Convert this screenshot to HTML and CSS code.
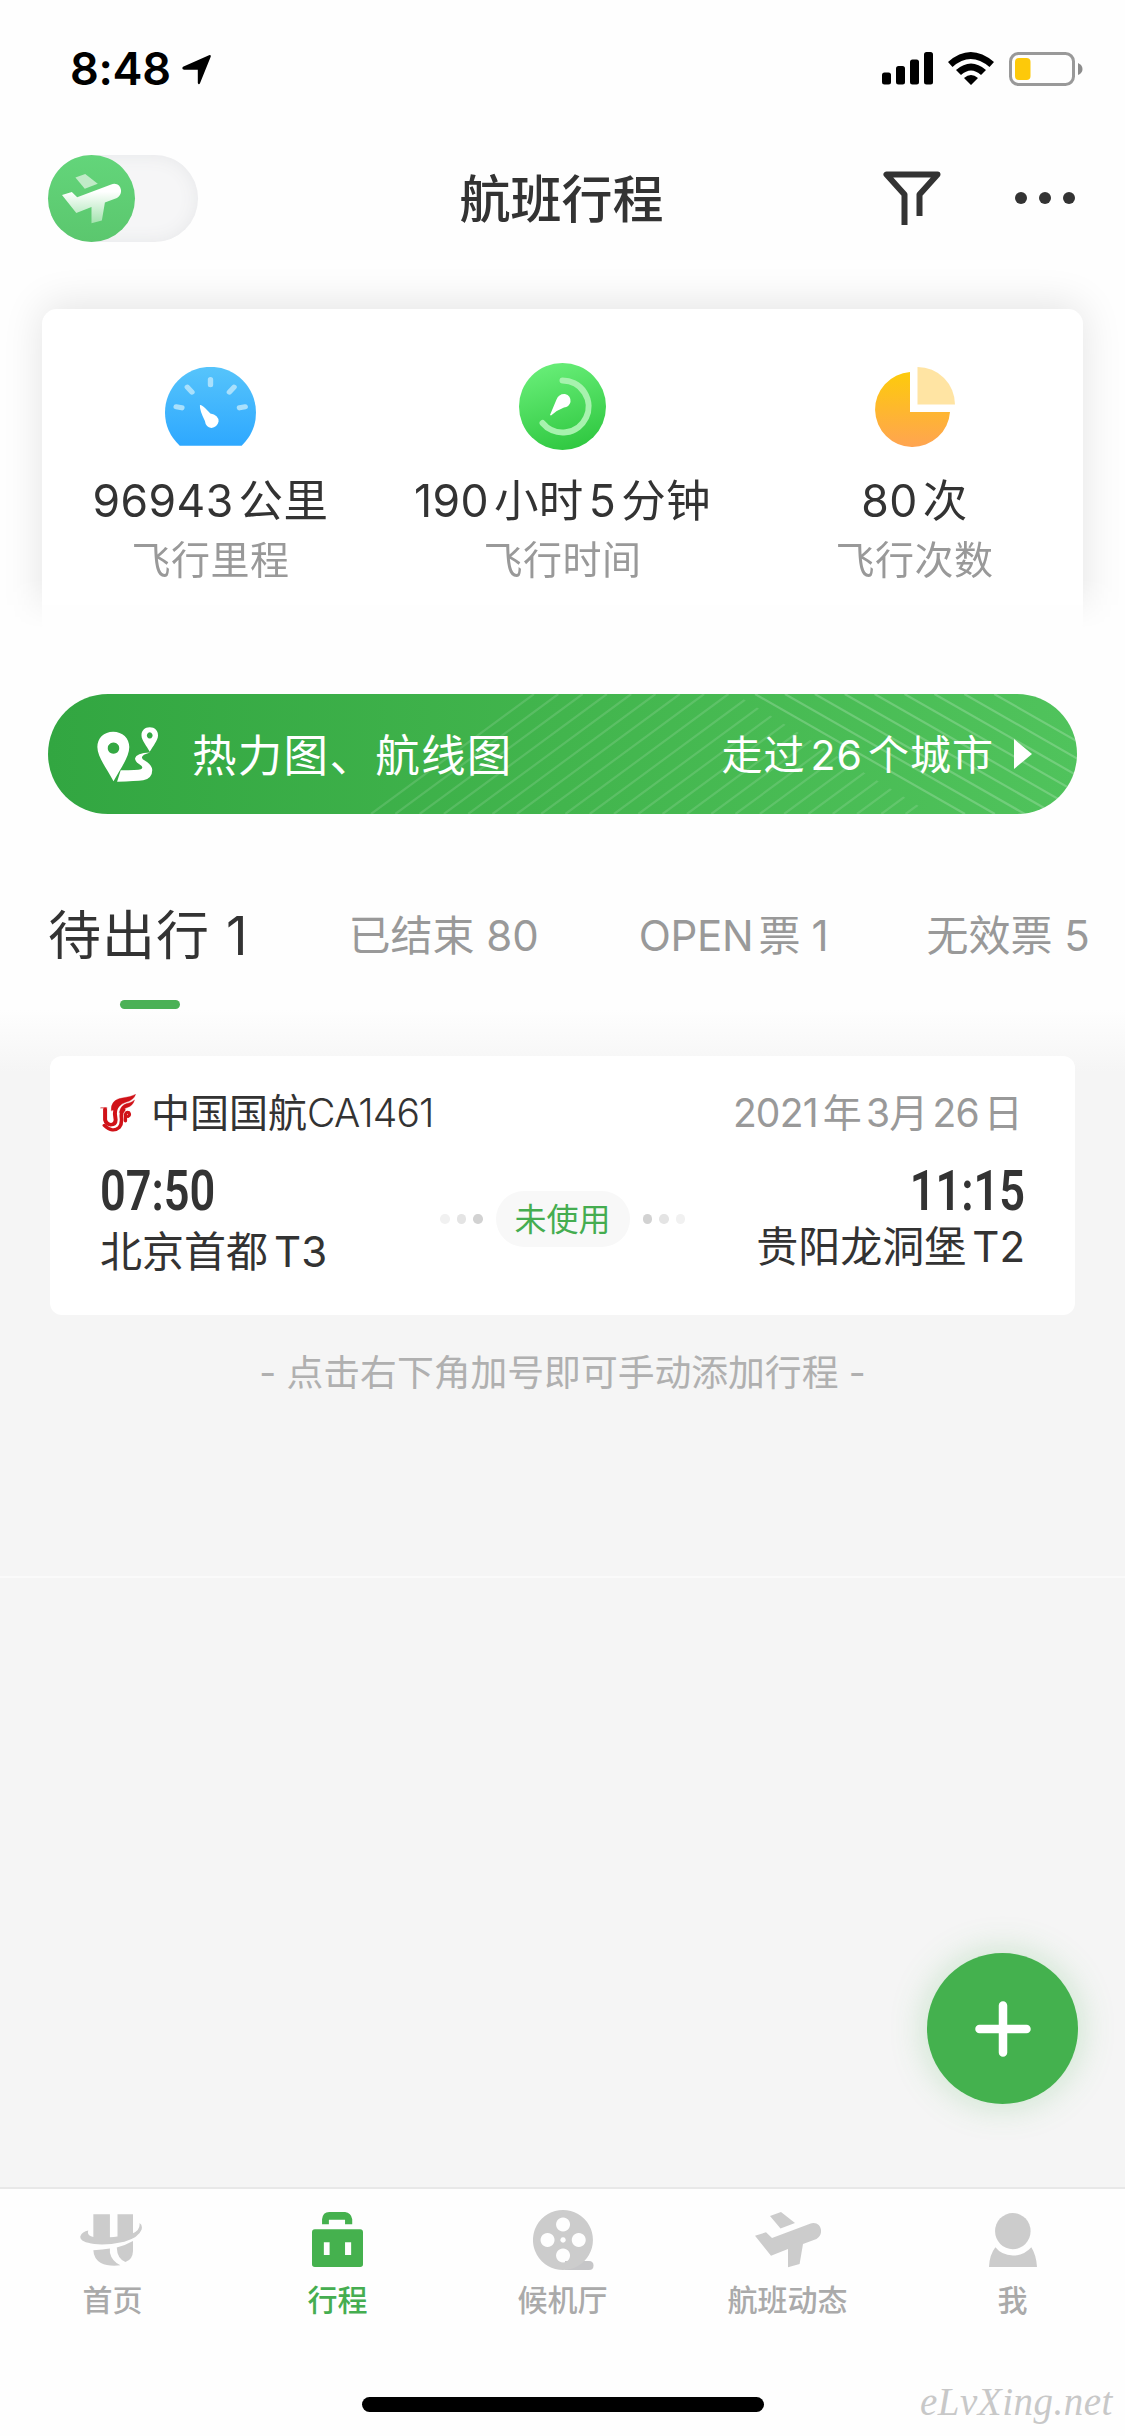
FILE: index.html
```html
<!DOCTYPE html>
<html lang="zh-CN">
<head>
<meta charset="utf-8">
<title>航班行程</title>
<link rel="stylesheet" href="styles.css">
</head>
<body>
<div class="screen">
  <div class="statusbar">
    <div class="clock">8:48</div>
    <svg class="locate" viewBox="0 0 29 31"><path d="M27 1.2Q29.400 .5 28.600 3L18 29.300Q16.800 31.500 15.800 29V15.800H2.200Q-.8 14.800 1 12.800Z"/></svg>
    <div class="status-icons">
      <svg width="51" height="33" viewBox="0 0 51 33"><rect y="20.500" width="9" height="12" rx="2.500"/><rect x="14" y="14" width="9" height="18.500" rx="2.500"/><rect x="28" y="7.500" width="9" height="25" rx="2.500"/><rect x="42" width="9" height="32.500" rx="2.500"/></svg>
      <svg class="wifi" width="46" height="33" viewBox="0 0 46 33"><path d="M0 10Q22.500-10 46 10L41.500 15Q22.500-1 4.500 15ZM8 18Q23 5 38 18L33 23Q23 14 13 23ZM16 26Q23 20 30 26L23 33Z"/></svg>
      <svg class="battery" width="74" height="34" viewBox="0 0 74 34"><rect x="1.500" y="1.500" width="63" height="31" rx="8" fill="none" stroke="#999" stroke-width="3"/><rect x="6" y="6" width="15.500" height="22" rx="4" fill="#fdc90a"/><path d="M69 11Q73.500 13 73.500 17T69 23Z" fill="#8c8c8c"/></svg>
    </div>
  </div>

  <header class="header">
    <div class="toggle"><div class="knob">
      <svg width="59" height="51" viewBox="0 0 66 57">
        <defs><linearGradient id="wing" x1="0" y1="0" x2="0" y2="1"><stop offset=".2" stop-color="#fff"/><stop offset="1" stop-color="#a3e3ae"/></linearGradient></defs>
        <path d="M15 5 26 1 40 12 25.500 17.500Z" fill="#c0ebc7"/><path d="M0 24.700 11 21.300 17 27 55 12.700C66 9 70 23 61.500 28L48 33 44.600 53 33 56.300V38L16 44.700Z" fill="url(#wing)"/>
      </svg>
    </div></div>
    <h1>航班行程</h1>
    <div class="actions">
      <svg width="58" height="55" viewBox="0 0 58 55" fill="none" stroke="#333" stroke-width="6" stroke-linejoin="round"><path d="M21.500 54V23.500L3.500 3.500H54.500L36.500 23.500V45"/></svg>
      <svg width="60" height="12" viewBox="0 0 60 12" fill="#333"><circle cx="6" cy="6" r="6"/><circle cx="30" cy="6" r="6"/><circle cx="54" cy="6" r="6"/></svg>
    </div>
  </header>

  <div class="summary-wrap">
    <section class="summary">
      <div class="stat">
        <svg class="ic gauge" viewBox="459 231 253 236" preserveAspectRatio="none">
          <defs><linearGradient id="blue" x1="0" y1="0" x2="0" y2="1"><stop stop-color="#56c4fb"/><stop offset="1" stop-color="#2ea8ff"/></linearGradient></defs>
          <path d="M500 466Q459 425 459 367A126 136 0 0 1 712 367Q712 425 672 466Z" fill="url(#blue)"/>
          <path d="M585.500 268V284M521 291 534 306M651 291 638 306M490 350 506 353M682 350 666 353" stroke="#a9e0fc" stroke-width="15" stroke-linecap="round"/>
          <path d="M556 345C560 342 572 354 585 370Q608 374 608 394 604 412 588 413 572 410 570 392 555 360 556 345Z" fill="#fff"/>
        </svg>
        <div class="value"><span class="n">96943</span>公里</div>
        <div class="label">飞行里程</div>
      </div>
      <div class="stat">
        <svg class="ic timer" viewBox="0 0 87 87">
          <defs><linearGradient id="green" x1=".3" y1="0" x2=".6" y2="1"><stop stop-color="#68ee78"/><stop offset="1" stop-color="#30c841"/></linearGradient></defs>
          <circle cx="43.500" cy="43.500" r="43.500" fill="url(#green)"/>
          <path d="M43.500 17.500A26 26 0 1 1 23.500 60" fill="none" stroke="#a7f2ae" stroke-width="6" stroke-linecap="round"/>
          <path d="M31 52 37.500 36.500Q40 30.500 46 31 52 32.500 51.500 39 50 44 45 44.500 38 47 32 52.500Z" fill="#fff"/>
        </svg>
        <div class="value"><span class="n">190</span>小时<span class="n m">5</span>分钟</div>
        <div class="label">飞行时间</div>
      </div>
      <div class="stat">
        <svg class="ic pie" viewBox="0 0 80 80">
          <defs><linearGradient id="amber" x1="0" y1="0" x2="0" y2="1"><stop stop-color="#fdcb0b"/><stop offset="1" stop-color="#ffa451"/></linearGradient></defs>
          <path d="M35 5V45H75A37.500 37.500 0 1 1 35 5Z" fill="url(#amber)"/><path d="M42.500 0A37.500 37.500 0 0 1 80 37.500H42.500Z" fill="#ffe4a3"/>
        </svg>
        <div class="value"><span class="n">80</span>次</div>
        <div class="label">飞行次数</div>
      </div>
    </section>
  </div>

  <section class="banner">
    <svg class="stripes" viewBox="0 0 1029 120" fill="none" stroke="#fff" stroke-width="2.200">
      <defs><clipPath id="left-part"><path d="M0 0H687L884 120H0Z"/></clipPath></defs>
      <path clip-path="url(#left-part)" stroke-opacity=".13" d="M323 120l163-120m-138.700 120l163-120m-138.700 120l163-120m-138.700 120l163-120m-138.700 120l163-120m-138.700 120l163-120m-138.700 120l163-120m-138.700 120l163-120m-138.700 120l163-120m-138.700 120l163-120m-138.700 120l163-120m-138.700 120l163-120m-138.700 120l163-120m-138.700 120l163-120m-138.700 120l163-120m-138.700 120l163-120m-138.700 120l163-120m-138.700 120l163-120m-138.700 120l163-120m-138.700 120l163-120m-138.700 120l163-120m-138.700 120l163-120m-138.700 120l163-120"/>
      <path stroke-opacity=".2" d="M707 0l210 120m-180.100-120l210 120m-180.100-120l210 120m-180.100-120l210 120m-180.100-120l210 120m-180.100-120l210 120m-180.100-120l210 120m-180.100-120l210 120m-180.100-120l210 120"/>
    </svg>
    <svg class="route" viewBox="271 172 170 164" preserveAspectRatio="none" fill="#fff" fill-rule="evenodd">
      <path d="M316 186C290 186 272 205 272 232 272 262 300 298 317 334 335 298 361 262 361 232 361 205 342 186 316 186ZM317 218A16 17 0 1 1 316.900 218Z"/>
      <path d="M418 173C404 173 395 183 395 197 395 212 410 228 418 246 427 228 441 212 441 197 441 183 432 173 418 173ZM418 188A8 9 0 1 1 417.900 188Z"/>
      <path d="M419 248Q380 250 377 265 377 275 390 284 403 292 393 298 384 301 337 301L327 335Q380 334 400 331 425 325 425 300 424 285 405 273 382 259 419 248Z"/>
    </svg>
    <div class="banner-title">热力图、航线图</div>
    <div class="banner-more">走过<span class="n m">26</span>个城市</div>
    <svg class="tri" width="18" height="30" viewBox="0 0 18 30"><path d="M0 0 18 15 0 30Z" fill="#fff"/></svg>
  </section>

  <nav class="tabs">
    <div class="tab active">待出行 1</div>
    <div class="tab t2">已结束 80</div>
    <div class="tab t3"><span class="n">OPEN</span>票 1</div>
    <div class="tab t4">无效票 5</div>
  </nav>

  <main class="content">
    <article class="flight">
      <div class="row top">
        <svg class="logo" viewBox="277 190 99 115" preserveAspectRatio="none" fill="none" stroke="#d01218" stroke-linecap="round">
          <path d="M279 232H296" stroke-width="3"/>
          <path d="M291 236V268Q294 281 306 283 320 283 320 268L318 250Q318 230 330 220" stroke-width="11"/>
          <path d="M289 285Q312 309 330 291 338 280 336 262 334 246 342 238" stroke-width="10"/>
          <path d="M347 272V252Q349 243 356 246 361 254 354 258" stroke-width="9"/>
          <path d="M308 240Q306 207 338 202 362 199 375 191 370 209 348 215 330 221 323 236Z" fill="#d01218" stroke-width="1"/>
          <path d="M330 246Q334 224 350 219 366 215 372 208 367 226 352 231 340 234 338 246Z" fill="#d01218" stroke-width="1"/>
        </svg>
        <div class="airline">中国国航<span class="code">CA1461</span></div>
        <div class="date">2021<span class="m">年</span>3<span class="s">月</span>26<span class="s2">日</span></div>
      </div>
      <div class="row legs">
        <div class="leg"><div class="time">07:50</div><div class="port">北京首都<span class="term">T3</span></div></div>
        <div class="state">
          <i class="dot a"></i><i class="dot b"></i><i class="dot c"></i>
          <span class="pill">未使用</span>
          <i class="dot c"></i><i class="dot b"></i><i class="dot a"></i>
        </div>
        <div class="leg right"><div class="time">11:15</div><div class="port">贵阳龙洞堡<span class="term">T2</span></div></div>
      </div>
    </article>
    <p class="hint">- 点击右下角加号即可手动添加行程 -</p>
    <div class="seam"></div>
  </main>

  <button class="fab" aria-label="添加行程"><svg width="56" height="56" viewBox="0 0 56 56" stroke="#fff" stroke-width="8.500" stroke-linecap="round"><path d="M28 4.500V51.500M4.500 28H51.500"/></svg></button>

  <footer class="tabbar">
    <div class="item">
      <svg class="home" viewBox="222 130 172 154" preserveAspectRatio="none">
        <path d="M259 131H305V199Q316 199 326 197V131H369V187Q390 176 387 157 396 162 393 176 385 200 345 212 300 223 262 219 220 213 223 196 228 182 245 179 240 195 259 198Z"/>
        <path d="M259 237Q285 236 305 232V245Q310 270 334 282 300 286 280 275 260 262 259 237ZM324 229Q350 222 369 210V240Q368 265 348 272 325 262 324 229Z"/>
      </svg><span>首页</span></div>
    <div class="item on">
      <svg class="bag" viewBox="868 123 142 165" preserveAspectRatio="none" fill-rule="evenodd">
        <path d="M896 160V145Q898 123 916 123H960Q977 125 980 145V160H960V146H915V160ZM876 175H1002Q1010 175 1010 184V280Q1010 288 1002 288H876Q868 288 868 280V184Q868 175 876 175ZM901 214V252H917V214ZM960 214V252H977V214Z"/>
      </svg><span>行程</span></div>
    <div class="item">
      <svg class="reel" viewBox="0 0 61 60"><path d="M32 51H56Q60.500 51 60.500 55.500T56 60H32Z" fill="#c6c6c8"/><path fill-rule="evenodd" d="M30 0A30 30 0 1 1 29.900 0ZM30 7.500A7 7 0 1 0 30.100 7.500ZM30 38.500A7 7 0 1 0 30.100 38.500ZM14.500 23A7 7 0 1 0 14.600 23ZM45.700 23A7 7 0 1 0 45.800 23ZM30 27.300A2.700 2.700 0 1 0 30.100 27.300Z"/></svg><span>候机厅</span></div>
    <div class="item">
      <svg class="plane" viewBox="0 0 66 57"><path d="M15 5 26 1 40 12 25.500 17.500ZM0 24.700 11 21.300 17 27 55 12.700C66 9 70 23 61.500 28L48 33 44.600 53 33 56.300V38L16 44.700Z"/></svg><span>航班动态</span></div>
    <div class="item">
      <svg class="me" viewBox="1187 125 135 161" preserveAspectRatio="none"><ellipse cx="1254" cy="179" rx="50" ry="54"/><path d="M1205 227Q1188 250 1187 286H1322Q1320 250 1306 227 1285 252 1254 252 1222 250 1205 227Z"/></svg><span>我</span></div>
  </footer>
  <div class="home-indicator"></div>
  <div class="watermark">eLvXing.net</div>
</div>
</body>
</html>
```
FILE: styles.css
```css
* { box-sizing: border-box; }
body { margin: 0; background: #fff; }
.screen {
  position: relative;
  width: 1125px;
  height: 2436px;
  overflow: hidden;
  display: flex;
  flex-direction: column;
  background: #fefefe;
  color: #333;
  font-family: Inter, "Noto Sans CJK SC", sans-serif;
  white-space: nowrap;
}
svg { display: block; flex: none; }
.n { margin-right: 5px; }
.m { margin-left: 5px; margin-right: 5px; }

.statusbar { height: 132px; display: flex; padding: 0 42px 0 70px; align-items: flex-start; color: #000; }
.clock { margin-top: 41px; width: 112px; font-size: 45px; line-height: 56px; font-weight: 600; letter-spacing: -.3px; }
.locate { width: 29px; height: 31px; margin-top: 54px; }
.status-icons { margin-left: auto; margin-top: 52px; display: flex; }
.status-icons .wifi { margin-left: 15px; }
.status-icons .battery { margin-left: 15px; }

.header { height: 132px; display: grid; grid-template-columns: 1fr auto 1fr; align-items: center; padding: 0 50px 0 48px; }
.toggle { width: 150px; height: 87px; border-radius: 44px; background: #f6f6f7; box-shadow: inset 0 0 18px #e6e7e9; }
.knob { width: 87px; height: 87px; border-radius: 50%; background: linear-gradient(#63d57a, #5bc76e); padding: 18px 0 0 14px; }
.header h1 { margin: 3px 0 0; font-size: 51px; line-height: 70px; font-weight: 500; }
.actions { display: flex; justify-content: flex-end; align-items: center; gap: 74px; }

.summary-wrap { height: 366px; padding: 45px 42px 0; overflow: hidden; -webkit-mask-image: linear-gradient(#000 315px, transparent 366px); mask-image: linear-gradient(#000 315px, transparent 366px); }
.summary { height: 330px; border-radius: 15px; background: #fff; box-shadow: 0 -4px 42px rgba(0,0,0,.11); display: flex; justify-content: center; }
.stat { width: 352px; display: flex; flex-direction: column; align-items: center; flex: none; }
.stat .ic { margin-bottom: auto; }
.gauge { width: 91px; height: 79px; margin-top: 58px; }
.timer { width: 87px; height: 87px; margin-top: 54px; }
.pie { width: 80px; height: 80px; margin-top: 58px; }
.stat .value { height: 60px; line-height: 60px; font-size: 44.500px; letter-spacing: .4px; }
.stat .label { height: 54px; line-height: 54px; font-size: 39px; letter-spacing: .5px; color: #999; margin-bottom: 53px; }
.stat .label { padding-top: 1px; }
.stat .value { position: relative; top: -1px; }

.banner { position: relative; margin: 64px 48px 0; height: 120px; border-radius: 60px; overflow: hidden; background: linear-gradient(90deg, #32a641, #42b54d 50%, #50c35c); color: #fff; display: flex; align-items: center; padding: 0 45px 0 49px; flex: none; }
.stripes { position: absolute; inset: 0; width: 1029px; height: 120px; }
.route { position: relative; width: 61px; height: 55px; }
.banner-title { position: relative; margin: -4px 0 0 34px; font-size: 44.500px; letter-spacing: 1.300px; }
.banner-more { position: relative; margin: -4px 0 0 auto; font-size: 41px; letter-spacing: 1px; }
.tri { position: relative; margin-left: 20px; }

.tabs { height: 196px; flex: none; display: flex; padding-left: 48px; align-items: flex-start; color: #999; font-size: 42px; }
.tab { height: 76px; line-height: 76px; margin-top: 84px; }
.tab.active { position: relative; color: #333; font-size: 53px; letter-spacing: 1px; }
.tab.active::after { content: ""; position: absolute; left: 72px; top: 102px; width: 60px; height: 9px; border-radius: 5px; background: #4bb156; }
.t2 { margin-left: 100px; }
.t3 { margin-left: 100px; letter-spacing: -.3px; }
.t4 { margin-left: 98px; }

.content { height: 1177px; flex: none; padding: 46px 50px 0; background: linear-gradient(#fefefe, #f5f5f5 62px); }
.flight { height: 259px; border-radius: 12px; background: #fff; padding: 29px 50px 0 50px; }
.row { display: flex; }
.top { height: 56px; align-items: center; font-size: 39px; }
.logo { width: 36px; height: 38px; }
.airline { margin: -6px 0 0 15px; }
.code { letter-spacing: -.8px; font-weight: 350; }
.date { margin: -6px 3px 0 auto; color: #999; letter-spacing: -.8px; }
.date .s { margin-right: 5px; }
.date .s2 { margin-left: 5px; }
.legs { justify-content: space-between; }
.leg { width: 300px; }
.time { margin-top: 22px; height: 57px; line-height: 57px; font-family: Roboto, sans-serif; font-weight: 600; font-size: 55px; transform: scaleX(.82); transform-origin: 0 50%; }
.right { text-align: right; }
.right .time { transform-origin: 100% 50%; }
.port { margin-top: 2px; height: 60px; line-height: 60px; font-size: 42px; }
.right .port { margin-top: -3px; }
.term { margin-left: 6px; }
.state { display: flex; align-items: center; height: 56px; margin-top: 50px; gap: 7px; }
.dot { width: 9.500px; height: 9.500px; border-radius: 50%; }
.a { background: #f1f1f1; }
.b { background: #e4e4e4; }
.c { background: #d2d2d2; }
.pill { width: 134px; height: 56px; line-height: 57px; margin: 0 6px; border-radius: 28px; background: #f8f8f8; color: #45ad50; font-size: 32px; text-align: center; }
.hint { margin: 30px 0 0; height: 56px; line-height: 56px; font-size: 36.800px; color: #b0b0b0; text-align: center; }
.seam { height: 2px; margin: 175px -50px 0; background: #fafafa; }

.fab { position: absolute; left: 927px; top: 1953px; width: 151px; height: 151px; padding: 0; border: 0; border-radius: 50%; background: #44b14e; display: flex; align-items: center; justify-content: center; box-shadow: 0 0 36px rgba(68,177,78,.28); }

.tabbar { height: 210px; flex: none; display: flex; border-top: 2px solid #e8e8e8; }
.item { width: 225px; height: 133px; display: flex; flex-direction: column; align-items: center; color: #aaa; font-size: 30px; font-weight: 500; padding-top: 12px; }
.item svg { fill: #ccc; margin: auto 0; }
.item span { height: 44px; line-height: 44px; }
.item .home { width: 62px; height: 52px; margin-right: 4px; }
.item .bag { width: 51px; height: 55px; }
.item .reel { width: 61px; height: 60px; margin-left: 2px; }
.item .plane { width: 66px; height: 57px; }
.item .me { width: 48px; height: 54px; }
.on { color: #45ad50; }
.item.on svg { fill: #45b14e; }
.home-indicator { width: 402px; height: 15px; border-radius: 8px; background: #000; margin: 0 auto; }
.watermark { position: absolute; left: 920px; top: 2378px; font: italic 39px/48px "Liberation Serif", serif; letter-spacing: .5px; color: #c8c8c8; }
```
